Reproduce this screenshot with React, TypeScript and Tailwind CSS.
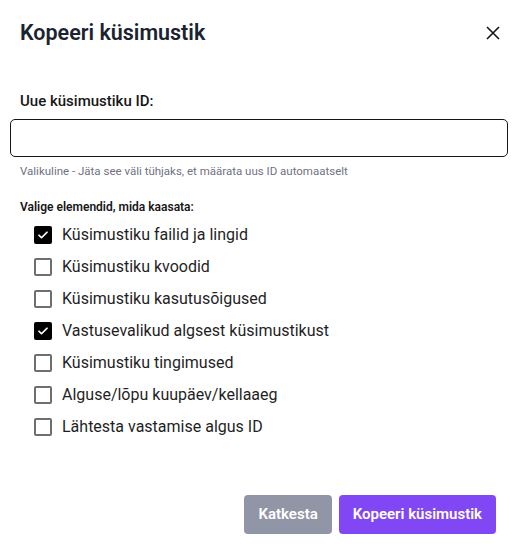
import React, { useState } from "react";

const options = [
  { label: "Küsimustiku failid ja lingid", checked: true },
  { label: "Küsimustiku kvoodid", checked: false },
  { label: "Küsimustiku kasutusõigused", checked: false },
  { label: "Vastusevalikud algsest küsimustikust", checked: true },
  { label: "Küsimustiku tingimused", checked: false },
  { label: "Alguse/lõpu kuupäev/kellaaeg", checked: false },
  { label: "Lähtesta vastamise algus ID", checked: false },
];

const CheckRow: React.FC<{ label: string; checked: boolean; onToggle: () => void }> = (props) => {
  return (
    <label className="flex items-center h-[32px] gap-[10px] cursor-pointer" onClick={props.onToggle}>
      {props.checked ? (
        <span className="w-[18px] h-[18px] rounded-[2px] bg-black flex items-center justify-center">
          <svg width="12" height="12" viewBox="0 0 24 24" fill="none" stroke="white" strokeWidth="3.5" strokeLinecap="round" strokeLinejoin="round">
            <path d="M4 12.5l5 5L20 6.5" />
          </svg>
        </span>
      ) : (
        <span className="w-[18px] h-[18px] rounded-[2px] border-2 border-[#6f6f6f] bg-white" />
      )}
      <span className="text-[16px] text-[#1f1f1f]">{props.label}</span>
    </label>
  );
};

export default function App() {
  const [checks, setChecks] = useState(options.map((o) => o.checked));
  return (
    <div
      className="w-[518px] h-[552px] bg-white flex flex-col text-[#161616]"
      style={{ fontFamily: "Roboto, 'Noto Sans', sans-serif" }}
    >
      <div className="flex items-center justify-between pl-[20px] pr-[16px] h-[66px]">
        <h2 className="text-[21.5px] font-semibold text-[#1b2330]">Kopeeri küsimustik</h2>
        <svg width="16" height="16" viewBox="0 0 16 16" stroke="#161616" strokeWidth="1.6" className="mr-[1px]">
          <path d="M2 2l12 12M14 2L2 14" />
        </svg>
      </div>
      <div className="flex flex-col px-[10px] mt-[24px]">
        <label className="pl-[10px] text-[15px] font-medium text-[#161616] mb-[6px]">Uue küsimustiku ID:</label>
        <input className="h-[38px] w-full border border-[#161616] rounded-[5px] px-3 outline-none" />
        <p className="pl-[10px] mt-[6px] text-[11.5px] text-[#6f7283]">
          Valikuline - Jäta see väli tühjaks, et määrata uus ID automaatselt
        </p>
        <p className="pl-[10px] mt-[18px] text-[12px] font-semibold text-[#161616]">Valige elemendid, mida kaasata:</p>
        <div className="flex flex-col pl-[24px] mt-[3px]">
          {options.map((o, i) => (
            <CheckRow
              key={i}
              label={o.label}
              checked={checks[i]}
              onToggle={() => setChecks((c) => c.map((v, j) => (j === i ? !v : v)))}
            />
          ))}
        </div>
      </div>
      <div className="flex justify-end gap-[7px] pr-[22px] mt-auto mb-[18px]">
        <button className="h-[39px] px-[14px] rounded-[4px] bg-[#9196a7] text-white text-[15px] font-semibold">Katkesta</button>
        <button className="h-[39px] px-[14px] rounded-[4px] bg-[#8247f5] text-white text-[15px] font-semibold">Kopeeri küsimustik</button>
      </div>
    </div>
  );
}
